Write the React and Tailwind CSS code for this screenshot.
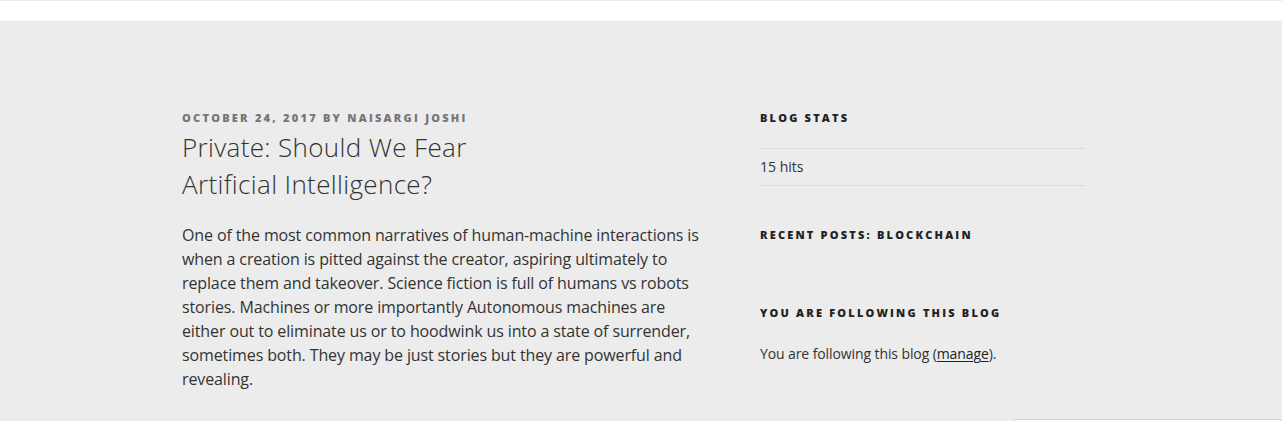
import React from 'react';

const WidgetTitle = ({ children, className = '' }) => (
  <h2 className={`text-[11px] leading-[16px] font-extrabold uppercase tracking-[0.2em] text-[#222] ${className}`}>
    {children}
  </h2>
);

export default function App() {
  return (
    <div className="min-h-[421px] bg-[#ececec] text-[#333] font-['Open_Sans','Liberation_Sans',sans-serif]">
      {/* header strip */}
      <div className="h-[22px] bg-white border-t border-t-[#eaeaea] border-b border-b-[#e3e3e3]" />

      <div className="flex pt-[88px] pl-[182px]">
        {/* main column */}
        <main className="w-[524px] shrink-0">
          <div className="text-[11px] leading-[16px] font-extrabold uppercase tracking-[2.25px] text-[#767676]">
            October 24, 2017 by Naisargi Joshi
          </div>
          <h1 className="mt-[3px] text-[26px] leading-[37px] font-light tracking-[0.35px] text-[#333]">
            Private: Should We Fear
            <br />
            Artificial Intelligence?
          </h1>
          <p className="mt-[20px] text-[16px] leading-[24px] tracking-[-0.12px] text-[#333]">
            One of the most common narratives of human-machine interactions is when a creation is pitted
            against the creator, aspiring ultimately to replace them and takeover. Science fiction is full of
            humans vs robots stories. Machines or more importantly Autonomous machines are either out to
            eliminate us or to hoodwink us into a state of surrender, sometimes both. They may be just stories
            but they are powerful and revealing.
          </p>
        </main>

        {/* sidebar */}
        <aside className="ml-[54px] w-[325px] shrink-0">
          <WidgetTitle>Blog Stats</WidgetTitle>
          <ul className="mt-[22px] border-t border-b border-[#dcdcdc]">
            <li className="py-[6px] text-[14px] leading-[24px] text-[#333]">15 hits</li>
          </ul>

          <WidgetTitle className="mt-[41px]">Recent Posts: Blockchain</WidgetTitle>

          <WidgetTitle className="mt-[62px]">You are following this blog</WidgetTitle>
          <p className="mt-[21px] text-[14px] leading-[24px] tracking-[-0.1px] text-[#333]">
            You are following this blog (
            <a href="#" className="text-[#222] underline underline-offset-2">manage</a>).
          </p>
        </aside>
      </div>

      {/* follow popup peeking from the bottom */}
      <div className="fixed left-[1014px] top-[419px] w-[268px] h-[40px] bg-white border border-[#c8d7e1]" />
    </div>
  );
}
